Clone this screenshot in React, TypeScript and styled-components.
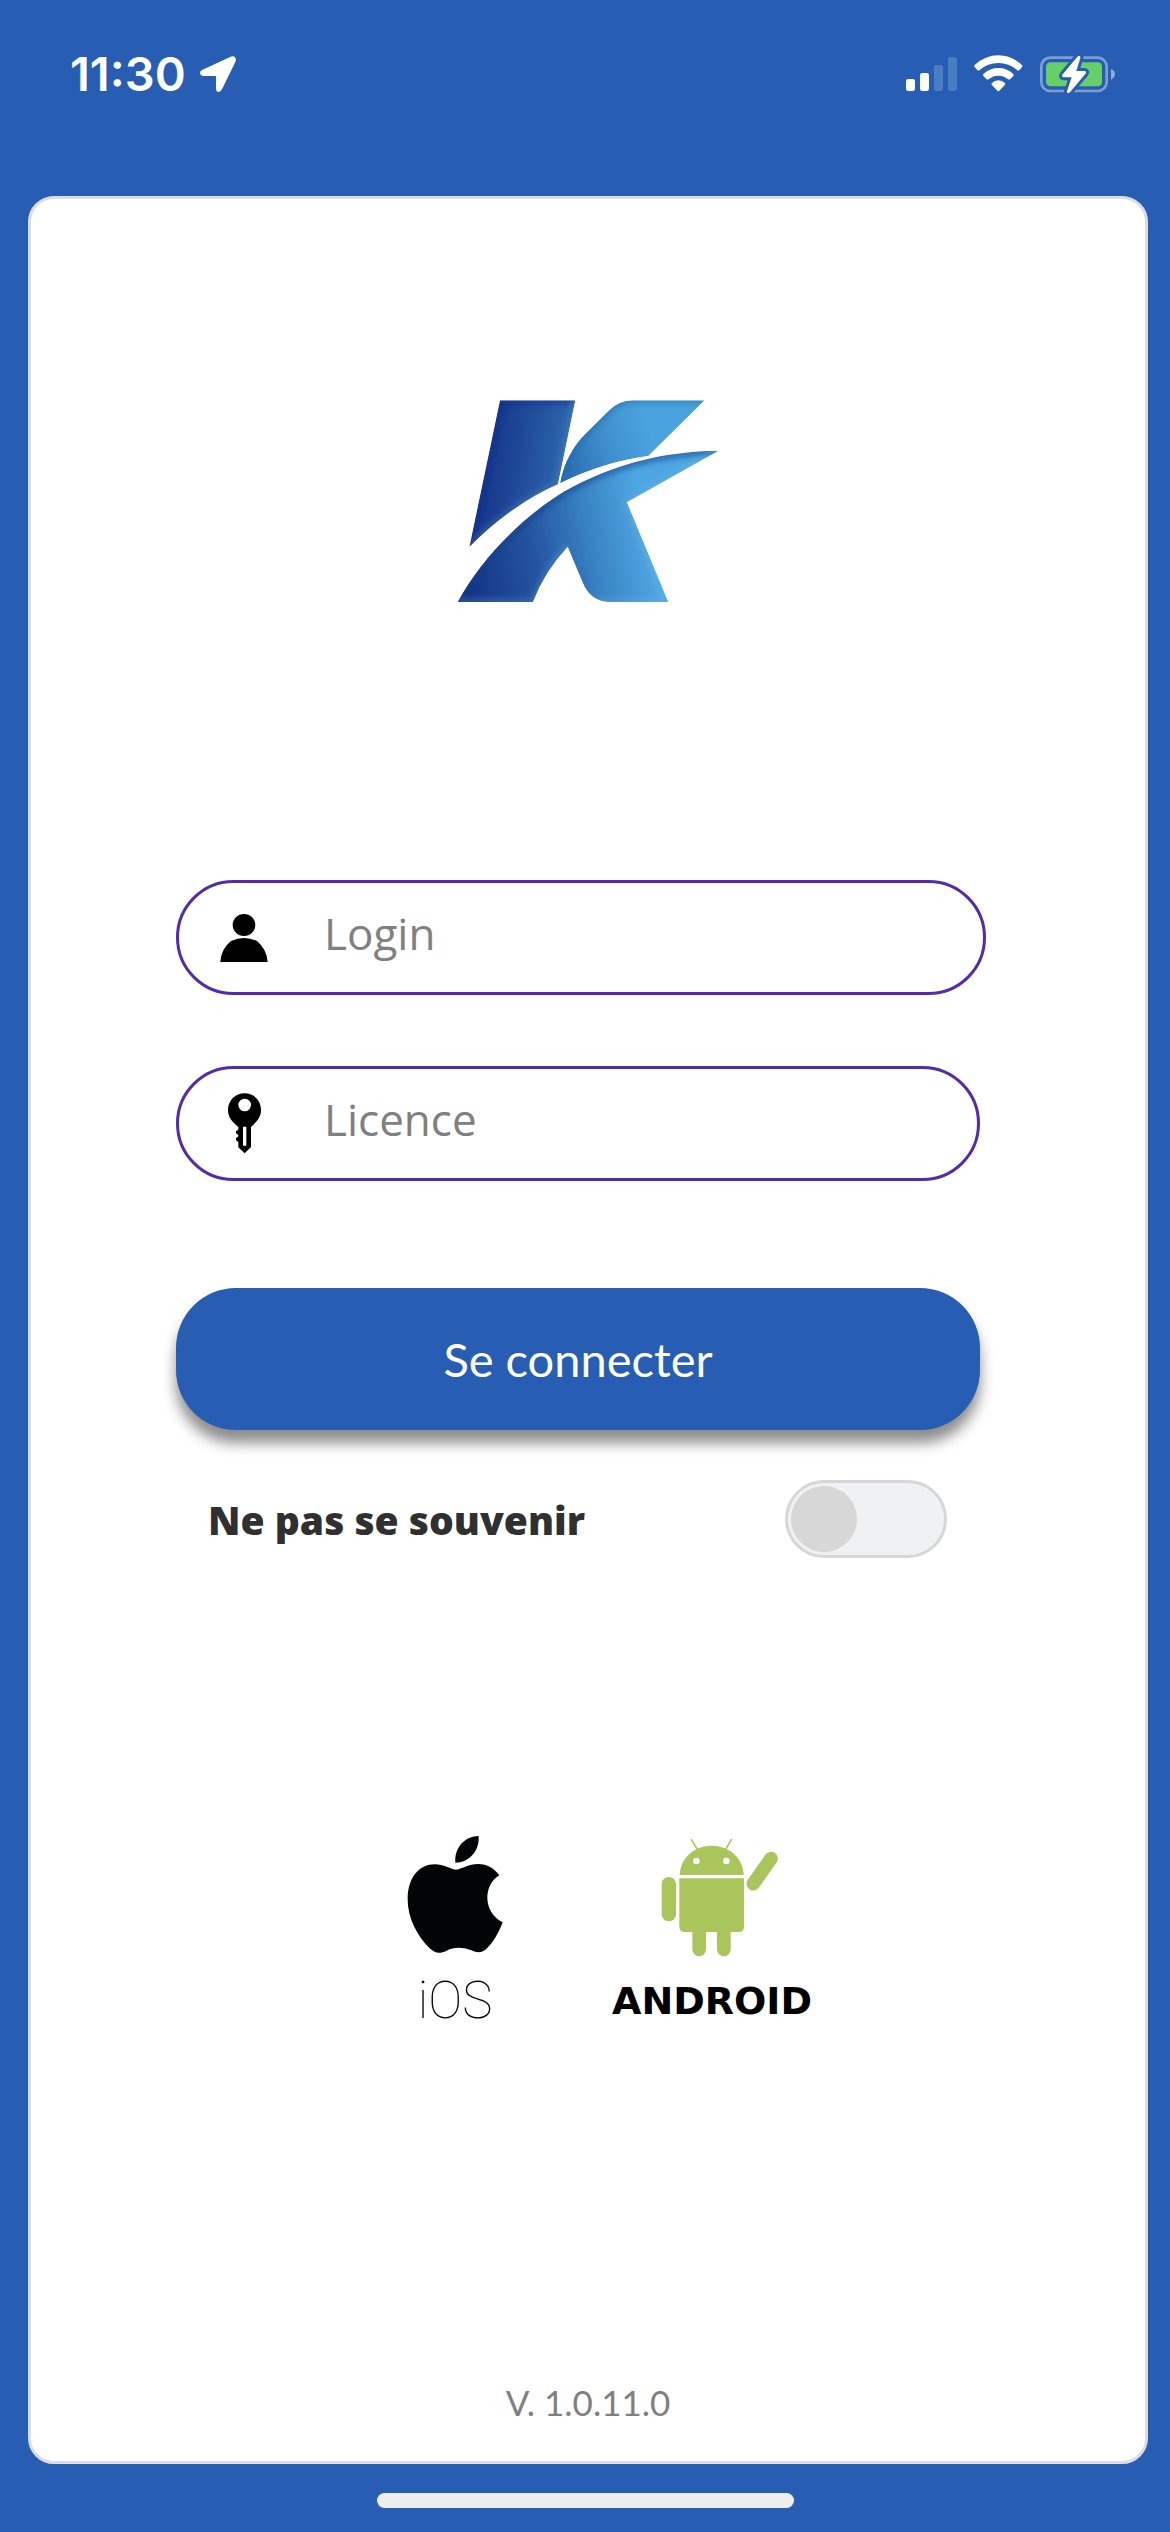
import React, { useState } from "react";
import styled, { createGlobalStyle } from "styled-components";

const BLUE = "#275db2";

const GlobalStyle = createGlobalStyle`
  * { box-sizing: border-box; }
  body { margin: 0; background: ${BLUE}; }
  input, button { font: inherit; }
`;

const Screen = styled.div`
  min-height: 100vh;
  display: flex;
  flex-direction: column;
  background: ${BLUE};
  font-family: "Open Sans", "Noto Sans", sans-serif;
`;

const StatusBar = styled.header`
  display: flex;
  justify-content: space-between;
  height: 196px;
  padding: 48px 55px 96px 70px;
  color: #fff;
`;

const StatusGroup = styled.div<{ $gap: number }>`
  display: flex;
  align-items: center;
  gap: ${(p) => p.$gap}px;
`;

const Clock = styled.span`
  font: 600 47px/52px Inter, sans-serif;
`;

const Drawing = styled.svg`
  display: block;
  flex: none;
`;

const Card = styled.main`
  flex: 1;
  display: flex;
  flex-direction: column;
  margin: 0 22px 0 28px;
  padding: 201px 0 37px;
  border: 3px solid #dcdde3;
  border-radius: 26px;
  background: #fff;
`;

const Brand = styled.div`
  display: flex;
  justify-content: center;
  margin-bottom: 275px;
`;

const Form = styled.form`
  display: flex;
  flex-direction: column;
  padding: 0 159px 0 145px;
`;

const Field = styled.label<{ $inset?: boolean }>`
  display: flex;
  align-items: center;
  gap: 56px;
  height: 115px;
  margin: 0 ${(p) => (p.$inset ? 6 : 0)}px 71px 0;
  padding: 0 41px;
  border: 3px solid #522bb0;
  border-radius: 58px;
`;

const FieldInput = styled.input`
  flex: 1;
  min-width: 0;
  height: 100%;
  padding: 0 0 10px;
  border: 0;
  outline: 0;
  background: transparent;
  color: #303030;
  font-size: 44px;
  &::placeholder { color: #808080; opacity: 1; }
`;

const Submit = styled.button`
  height: 142px;
  margin: 36px 6px 50px 0;
  border: 0;
  border-radius: 60px;
  background: ${BLUE};
  box-shadow: 0 13px 14px rgba(0, 0, 0, 0.45);
  color: #fff;
  font-family: Lato, sans-serif;
  font-size: 47px;
`;

const RememberRow = styled.div`
  display: flex;
  align-items: center;
  justify-content: space-between;
  padding: 0 39px 0 32px;
`;

const RememberLabel = styled.label`
  color: #303030;
  font-size: 39px;
  font-weight: 800;
`;

const Switch = styled.input`
  appearance: none;
  display: flex;
  width: 162px;
  height: 78px;
  margin: 0;
  padding: 3px;
  border: 3px solid #d7d7d7;
  border-radius: 39px;
  background: #f0f1f3;
  &::before {
    content: "";
    width: 66px;
    height: 66px;
    border-radius: 50%;
    background: #d7d7d7;
  }
  &:checked { justify-content: flex-end; }
`;

const Platforms = styled.div`
  display: flex;
  justify-content: center;
  gap: 108px;
  margin-top: 277px;
  padding-left: 42px;
`;

const Platform = styled.div`
  display: flex;
  flex-direction: column;
  align-items: center;
  gap: 12px;
  color: #000;
`;

const IosName = styled.span`
  font: 100 51px/64px Roboto, sans-serif;
`;

const AndroidName = styled.span`
  font: 700 38px/64px "DejaVu Sans", sans-serif;
`;

const Version = styled.p`
  margin: auto 0 0;
  color: #808080;
  text-align: center;
  font: 400 35px/44px Lato, sans-serif;
`;

const HomeArea = styled.footer`
  display: flex;
  justify-content: center;
  height: 68px;
  padding-top: 29px;
`;

const HomeIndicator = styled.div`
  width: 417px;
  height: 15px;
  border-radius: 8px;
  background: #eee;
`;

const LocationIcon = () => (
  <Drawing width="36" height="36" viewBox="600 170 108 108" fill="#fff" aria-hidden="true">
    <path d="M606 212L692 172Q701 169 706 175Q709 180 706 188L666 270Q661 279 654 278Q648 276 648 268V232Q648 230 646 230H611Q601 229 600 221Q600 215 606 212Z" />
  </Drawing>
);

const SignalIcon = () => (
  <Drawing width="51" height="36" viewBox="141 168 153 108" fill="#fff" aria-hidden="true">
    <rect x="141" y="237" width="27" height="36" rx="7" />
    <rect x="183" y="219" width="27" height="54" rx="7" />
    <rect x="225" y="195" width="27" height="78" rx="7" fill="#4a7ec3" />
    <rect x="267" y="171" width="27" height="102" rx="7" fill="#4a7ec3" />
  </Drawing>
);

const WifiIcon = () => (
  <Drawing width="49" height="38" viewBox="344 164 147 114" fill="#fff" aria-hidden="true">
    <path d="M346 194Q378 165 417 165T488 194Q491 198 488 201L480 209Q477 212 473 209Q449 188 417 188T361 209Q357 212 354 209L346 201Q343 198 346 194Z" />
    <path d="M373 220Q391 203 417 203T461 220Q465 224 462 227L453 236Q449 239 445 236Q433 226 417 226T389 236Q385 239 381 236L372 227Q369 224 373 220Z" />
    <path d="M398 248Q406 240 417 240T437 248Q439 250 437 253L420 271Q417 274 414 271L397 253Q395 250 398 248Z" />
  </Drawing>
);

const BatteryIcon = () => (
  <Drawing width="75" height="38" viewBox="540 164 225 114" aria-hidden="true">
    <rect x="544" y="172" width="196" height="100" rx="27" fill="none" stroke="#7f9fd2" strokeWidth="8" />
    <path d="M753 206Q765 211 765 221T753 238Z" fill="#93aedb" />
    <rect x="558" y="186" width="168" height="72" rx="13" fill="#67cf68" />
    <path
      d="M657 166Q662 167 661 173L649 212H674Q682 214 676 221L631 274Q625 280 622 277Q620 275 622 270L635 231H610Q603 228 608 222L652 169Q655 166 657 166Z"
      fill="#fff"
      stroke={BLUE}
      strokeWidth="18"
      paintOrder="stroke"
      strokeLinejoin="round"
    />
  </Drawing>
);

const BrandLogo = () => (
  <Drawing width="263" height="205" viewBox="76 62 789 615" role="img" aria-label="K">
    <defs>
      <linearGradient id="stem" gradientUnits="userSpaceOnUse" x1="140" y1="220" x2="430" y2="260">
        <stop offset="0" stopColor="#14338a" />
        <stop offset="0.35" stopColor="#1d4595" />
        <stop offset="1" stopColor="#2f6db1" />
      </linearGradient>
      <linearGradient id="arm" gradientUnits="userSpaceOnUse" x1="400" y1="240" x2="660" y2="160">
        <stop offset="0" stopColor="#2b70b3" />
        <stop offset="0.5" stopColor="#4090cf" />
        <stop offset="1" stopColor="#4aa3de" />
      </linearGradient>
      <linearGradient id="leg" gradientUnits="userSpaceOnUse" x1="110" y1="640" x2="720" y2="520">
        <stop offset="0" stopColor="#153486" />
        <stop offset="0.35" stopColor="#2455a1" />
        <stop offset="0.65" stopColor="#3b86c6" />
        <stop offset="0.9" stopColor="#4da6e1" />
      </linearGradient>
      <filter id="soft" x="-20%" y="-20%" width="140%" height="140%">
        <feGaussianBlur stdDeviation="9" />
      </filter>
      <clipPath id="stemClip">
        <path d="M205 63H431L379 315Q240 376 113 503Z" />
      </clipPath>
      <clipPath id="armClip">
        <path d="M819 63L650 230Q515 248 385 312C396 250 425 200 460 165L530 95Q560 64 603 63Z" />
      </clipPath>
      <clipPath id="legClip">
        <path d="M861 214L586 369L710 668H530Q475 664 453 610L408 503Q338 578 304 668H78C150 535 275 410 400 335C540 256 690 216 861 214Z" />
      </clipPath>
    </defs>
    <g clipPath="url(#stemClip)">
      <path d="M205 63H431L379 315Q240 376 113 503Z" fill="url(#stem)" />
      <path d="M113 503L205 63H431" fill="none" stroke="#0c2a82" strokeOpacity=".55" strokeWidth="20" filter="url(#soft)" />
      <path d="M431 63L379 315Q240 376 113 503" fill="none" stroke="#6d93c6" strokeOpacity=".45" strokeWidth="14" filter="url(#soft)" />
    </g>
    <g clipPath="url(#armClip)">
      <path d="M819 63L650 230Q515 248 385 312C396 250 425 200 460 165L530 95Q560 64 603 63Z" fill="url(#arm)" />
      <path d="M385 312C396 250 425 200 460 165L530 95Q560 64 603 63H819" fill="none" stroke="#1c5c9f" strokeOpacity=".55" strokeWidth="16" filter="url(#soft)" />
    </g>
    <g clipPath="url(#legClip)">
      <path d="M861 214L586 369L710 668H530Q475 664 453 610L408 503Q338 578 304 668H78C150 535 275 410 400 335C540 256 690 216 861 214Z" fill="url(#leg)" />
      <path d="M78 668C150 535 275 410 400 335C540 256 690 216 861 214" fill="none" stroke="#0a3f8a" strokeOpacity=".65" strokeWidth="22" filter="url(#soft)" />
      <path d="M304 668Q338 578 408 503M861 214L586 369L710 668H78" fill="none" stroke="#8bc1ea" strokeOpacity=".35" strokeWidth="14" filter="url(#soft)" />
    </g>
  </Drawing>
);

const PersonIcon = () => (
  <Drawing width="48" height="48" viewBox="178 165 144 144" aria-hidden="true">
    <ellipse cx="250" cy="198" rx="34" ry="33" />
    <path d="M179 309Q181 270 211 246Q250 228 289 246Q318 270 321 309Z" />
  </Drawing>
);

const KeyIcon = () => (
  <Drawing width="48" height="61" viewBox="180 699 144 183" aria-hidden="true">
    <path
      fillRule="evenodd"
      d="M254 700C282 700 303 722 303 750C303 772 290 785 273 801V861L254 880L235 862V846L228 841V835L235 829V825L228 820V814L235 809V801C216 785 204 772 204 750C204 722 226 700 254 700ZM254 716A19 19 0 1 0 254 754A19 19 0 1 0 254 716ZM249 800V857H259V800Z"
    />
  </Drawing>
);

const AppleLogo = () => (
  <Drawing width="98" height="122" viewBox="79 75 294 366" fill="#020506" aria-hidden="true">
    <path d="M297 78C300 124 267 158 227 158C223 112 257 78 297 78Z" />
    <path d="M229 179C250 176 265 162 296 162C322 162 343 174 359 196C310 225 309 306 369 337C356 372 338 400 319 418C306 430 292 429 275 421C248 411 223 411 201 422C179 432 166 430 149 414C113 378 84 326 84 268C84 200 121 163 165 163C193 163 211 177 229 179Z" />
  </Drawing>
);

const AndroidLogo = () => (
  <Drawing width="198" height="122" viewBox="63 75 594 366" fill="#a9c55b" aria-hidden="true">
    <path d="M298 89L316 118M418 89L401 118" fill="none" stroke="#a9c55b" strokeWidth="5" strokeLinecap="round" />
    <path d="M263 195C265 143 307 107 359 107S453 143 455 195Z" />
    <circle cx="313" cy="153" r="10" fill="#fff" />
    <circle cx="403" cy="153" r="10" fill="#fff" />
    <path d="M262 205H456V350Q456 366 440 366H416V418A20 20 0 0 1 375 418V366H342V418A20 20 0 0 1 301 418V366H278Q262 366 262 350Z" />
    <rect x="209" y="201" width="43" height="133" rx="21" />
    <path d="M484 221L537 146" fill="none" stroke="#a9c55b" strokeWidth="41" strokeLinecap="round" />
  </Drawing>
);

export default function App() {
  const [login, setLogin] = useState("");
  const [licence, setLicence] = useState("");

  return (
    <Screen>
      <GlobalStyle />
      <StatusBar>
        <StatusGroup $gap={14}>
          <Clock>11:30</Clock>
          <LocationIcon />
        </StatusGroup>
        <StatusGroup $gap={17}>
          <SignalIcon />
          <WifiIcon />
          <BatteryIcon />
        </StatusGroup>
      </StatusBar>
      <Card>
        <Brand>
          <BrandLogo />
        </Brand>
        <Form onSubmit={(e) => e.preventDefault()}>
          <Field>
            <PersonIcon />
            <FieldInput aria-label="Login" placeholder="Login" value={login} onChange={(e) => setLogin(e.target.value)} />
          </Field>
          <Field $inset>
            <KeyIcon />
            <FieldInput aria-label="Licence" placeholder="Licence" value={licence} onChange={(e) => setLicence(e.target.value)} />
          </Field>
          <Submit type="submit">Se connecter</Submit>
          <RememberRow>
            <RememberLabel htmlFor="remember">Ne pas se souvenir</RememberLabel>
            <Switch id="remember" type="checkbox" role="switch" />
          </RememberRow>
        </Form>
        <Platforms>
          <Platform>
            <AppleLogo />
            <IosName>iOS</IosName>
          </Platform>
          <Platform>
            <AndroidLogo />
            <AndroidName>ANDROID</AndroidName>
          </Platform>
        </Platforms>
        <Version>V. 1.0.11.0</Version>
      </Card>
      <HomeArea>
        <HomeIndicator />
      </HomeArea>
    </Screen>
  );
}
